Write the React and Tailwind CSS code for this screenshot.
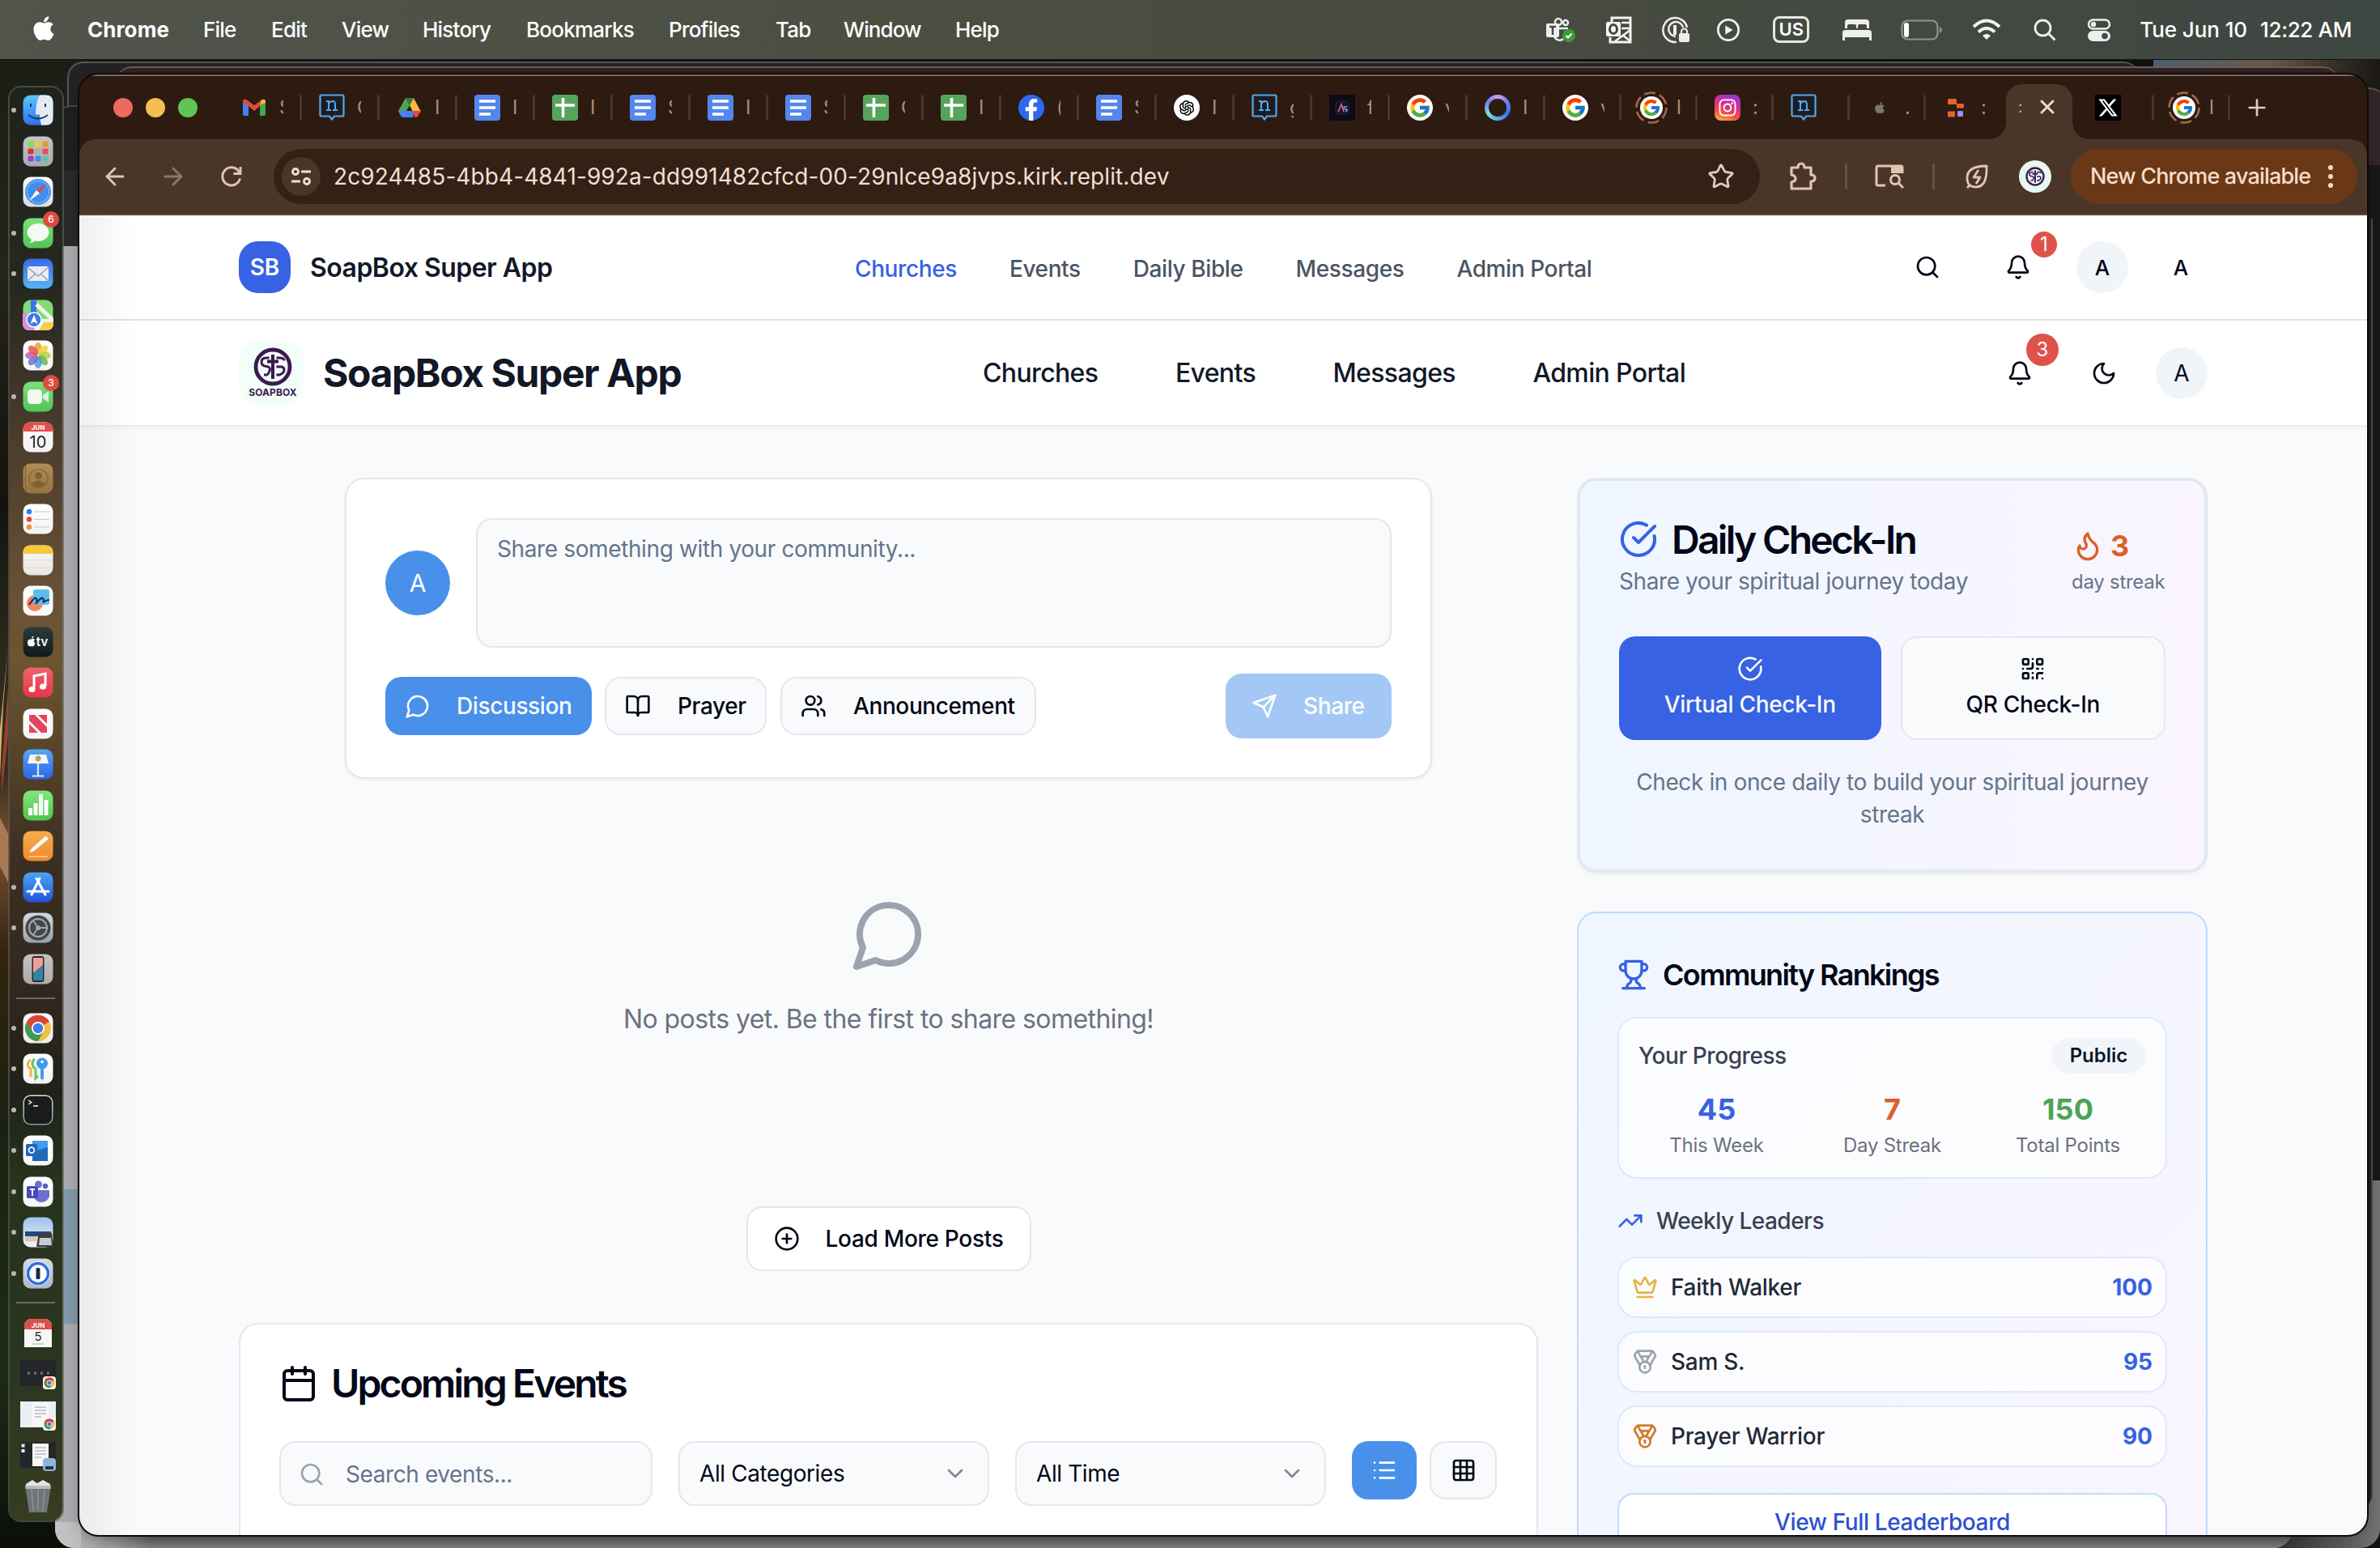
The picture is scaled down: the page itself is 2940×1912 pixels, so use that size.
import React from "react";
import {
  Search, Bell, BookOpen, Users, CirclePlus, Calendar, ChevronDown, List, Grid3x3, CircleCheckBig,
  QrCode, TrendingUp, Crown, Medal, ArrowLeft, ArrowRight, X, Plus, Star,
} from "lucide-react";
import { FaApple, FaFacebookF, FaInstagram } from "react-icons/fa";
import { FaXTwitter } from "react-icons/fa6";
import { FcGoogle } from "react-icons/fc";
import { AiOutlineOpenAI } from "react-icons/ai";

/* ---------- stroke icons ---------- */

function Stroke({ className, children }) {
  return (
    <svg viewBox="0 0 24 24" fill="none" stroke="currentColor" strokeWidth="2" strokeLinecap="round" strokeLinejoin="round" className={className}>
      {children}
    </svg>
  );
}
const Bubble = ({ className }) => <Stroke className={className}><path d="M7.9 20A9 9 0 1 0 4 16.1L2 22Z" /></Stroke>;
const SendIcon = ({ className }) => (
  <Stroke className={className}><path d="m22 2-7 20-4-9-9-4Z" /><path d="M22 2 11 13" /></Stroke>
);
const MoonIcon = ({ className }) => <Stroke className={className}><path d="M12 3a6 6 0 0 0 9 9 9 9 0 1 1-9-9Z" /></Stroke>;
const FlameIcon = ({ className }) => (
  <Stroke className={className}>
    <path d="M8.5 14.5A2.5 2.5 0 0 0 11 12c0-1.38-.5-2-1-3-1.072-2.143-.224-4.054 2-6 .5 2.5 2 4.9 4 6.5 2 1.6 3 3.5 3 5.5a7 7 0 1 1-14 0c0-1.153.433-2.294 1-3a2.5 2.5 0 0 0 2.5 2.5z" />
  </Stroke>
);
const TrophyIcon = ({ className }) => (
  <Stroke className={className}>
    <path d="M6 9H4.5a2.5 2.5 0 0 1 0-5H6" /><path d="M18 9h1.5a2.5 2.5 0 0 0 0-5H18" /><path d="M4 22h16" />
    <path d="M10 14.66V17c0 .55-.47.98-.97 1.21C7.85 18.75 7 20.24 7 22" />
    <path d="M14 14.66V17c0 .55.47.98.97 1.21C16.15 18.75 17 20.24 17 22" /><path d="M18 2H6v7a6 6 0 0 0 12 0V2Z" />
  </Stroke>
);

/* ---------- macOS menu bar ---------- */

const MENUS = [
  ["Chrome", "w-[143px] font-bold tracking-[0.003em]"],
  ["File", "w-[84px] font-medium tracking-[-0.03em]"],
  ["Edit", "w-[87px] font-medium tracking-[-0.03em]"],
  ["View", "w-[100px] font-medium tracking-[-0.03em]"],
  ["History", "w-[128px] font-medium tracking-[-0.03em]"],
  ["Bookmarks", "w-[176px] font-medium tracking-[-0.03em]"],
  ["Profiles", "w-[132px] font-medium tracking-[-0.03em]"],
  ["Tab", "w-[84px] font-medium tracking-[-0.03em]"],
  ["Window", "w-[138px] font-medium tracking-[-0.035em]"],
  ["Help", "w-[60px] font-medium tracking-[-0.03em]"],
];

function MenuBar() {
  return (
    <div className="relative flex h-[73px] w-full items-center bg-linear-to-r from-[#51544b] via-[#4a4c3f] to-[#3f4743] pl-[38px] text-[26px] text-white">
      <FaApple className="mr-[38px] mb-[3px] h-[34px] w-[32px]" />
      {MENUS.map(([label, cls]) => (
        <span key={label} className={`shrink-0 ${cls}`}>{label}</span>
      ))}
      <div className="mr-[35px] ml-auto flex items-center">
        <svg viewBox="0 0 40 34" className="mr-[36px] h-[34px] w-[40px]">
          <circle cx="18" cy="7" r="4" fill="none" stroke="#eee" strokeWidth="2.5" />
          <circle cx="27" cy="8" r="3" fill="none" stroke="#eee" strokeWidth="2.5" />
          <path d="M14 15h16M13 24c1 6 8 7 11 4" stroke="#eee" strokeWidth="2.5" fill="none" />
          <rect x="3" y="9" width="16" height="17" rx="2" fill="#eee" />
          <path d="M7 13h8M11 13v10" stroke="#474a3f" strokeWidth="2.5" />
          <circle cx="31" cy="24" r="8" fill="#3f9a34" /><path d="m27.500 24 2.500 2.500 4.500-5" stroke="#fff" strokeWidth="2" fill="none" />
        </svg>
        <svg viewBox="0 0 34 34" className="mr-[35px] h-[34px] w-[34px]">
          <path d="M8 7V2h23v30H6v-6" fill="none" stroke="#f4f4f4" strokeWidth="3" />
          <path d="M20 8h11M20 15h11M12 31l19-14M21 23l10 8" fill="none" stroke="#f4f4f4" strokeWidth="2.600" />
          <rect x="1" y="7" width="18" height="18" rx="2" fill="#f4f4f4" /><ellipse cx="10" cy="16" rx="4.500" ry="5.500" fill="none" stroke="#43483f" strokeWidth="3" />
        </svg>
        <svg viewBox="0 0 36 34" className="mr-[32px] h-[34px] w-[36px]" fill="none" stroke="#eee">
          <path d="M19 32A15 15 0 1 1 32 14" strokeWidth="2.500" /><path d="M18 25a9 9 0 1 1 9-11" strokeWidth="2.500" /><path d="M17 11v12" strokeWidth="4" />
          <rect x="22" y="21" width="13" height="11" rx="2" fill="#eee" stroke="none" /><path d="M25 22v-3a3.500 3.500 0 0 1 7 0v3" strokeWidth="2.200" />
        </svg>
        <svg viewBox="0 0 32 32" className="mr-[40px] h-[30px] w-[30px]">
          <circle cx="16" cy="16" r="13.500" fill="none" stroke="#eee" strokeWidth="3" /><path d="M12 10v12l10-6z" fill="#eee" />
        </svg>
        <span className="mr-[40px] flex h-[33px] w-[45px] items-center justify-center rounded-[8px] border-[3px] border-[#e6e6e4] text-[22px] font-semibold">US</span>
        <svg viewBox="0 0 38 28" className="mr-[35px] h-[28px] w-[38px]" fill="#eee">
          <path d="M4 12V5q0-4 4-4h22q4 0 4 4v7h-3V9q0-2-2-2h-7q-2 0-2 2v3h-2V9q0-2-2-2H9Q7 7 7 9v3zM1 27V17q0-3 4-3h28q4 0 4 3v10h-3v-4H4v4z" />
        </svg>
        <svg viewBox="0 0 52 26" className="mr-[36px] h-[26px] w-[52px]">
          <rect x="1.500" y="1.500" width="44" height="23" rx="7" fill="none" stroke="#90948e" strokeWidth="2.200" /><rect x="4" y="4" width="6" height="18" rx="3" fill="#fff" /><path d="M48 9q3 1.500 3 4t-3 4z" fill="#90948e" />
        </svg>
        <svg viewBox="0 0 36 28" className="mr-[40px] h-[28px] w-[36px]" fill="none" stroke="#f2f2f2" strokeWidth="4">
          <path d="M2 10Q18-5 34 10" /><path d="M8 16.500q10-9 20 0" /><path d="M18 26l-5-5q5-4 10 0z" fill="#f2f2f2" stroke="none" />
        </svg>
        <svg viewBox="0 0 28 28" className="mr-[38px] h-[28px] w-[28px]" fill="none" stroke="#eee" strokeWidth="2.800"><circle cx="11.500" cy="11.500" r="9.500" /><path d="m18.500 18.500 8 8" /></svg>
        <svg viewBox="0 0 30 28" className="mr-[35px] h-[28px] w-[30px]">
          <rect x="2" y="1.500" width="26" height="11" rx="5.500" fill="none" stroke="#eee" strokeWidth="2.500" /><circle cx="8" cy="7" r="3.200" fill="#eee" />
          <rect x="1" y="15" width="28" height="13" rx="6.500" fill="#eee" /><circle cx="22" cy="21.500" r="3.800" fill="#434943" />
        </svg>
        <span className="mr-[16px] font-medium tracking-[-0.003em]">Tue Jun 10</span>
        <span className="font-medium tracking-[-0.014em]">12:22 AM</span>
      </div>
    </div>
  );
}

/* ---------- dock ---------- */

const G = ({ id, a, b }) => (
  <defs><linearGradient id={id} x1="0" y1="0" x2="0" y2="1"><stop offset="0" stopColor={a} /><stop offset="1" stopColor={b} /></linearGradient></defs>
);

function Tile({ id, a, b, children }) {
  return (
    <svg viewBox="0 0 38 38" className="h-[38px] w-[38px]">
      <G id={id} a={a} b={b} />
      <rect x="0.5" y="0.5" width="37" height="37" rx="9" fill={`url(#${id})`} />
      {children}
    </svg>
  );
}

const ChromeMark = ({ r = 16, cx = 19, cy = 19 }) => (
  <g transform={`translate(${cx} ${cy}) scale(${r / 16})`}>
    <circle r="16" fill="#f5bf42" />
    <path d="M0 0-13.860-8A16 16 0 0 1 13.860-8z" fill="#d9453a" /><path d="M-13.860-8A16 16 0 0 0 0 16L7 4-7 4z" fill="#3f9a50" /><path d="M0-8h13.860A16 16 0 0 0-13.860-8L-7 4z" fill="#d9453a" />
    <circle r="8" fill="#fff" /><circle r="6.200" fill="#3f7de8" />
  </g>
);

const LAUNCH = ["#7ee04a", "#f5c33b", "#ee9433", "#d4372c", "#a9aeb2", "#ea4d63", "#9a3fc9", "#3b8df0", "#56c9a6"];
const PETALS = ["#f29a38", "#f5d33c", "#b9d23e", "#6bb85a", "#4e9fd8", "#6c74c9", "#b866b8", "#e8564c"];

const DOCK_APPS = [
  { dot: true, icon: <Tile id="d0" a="#5cc8fa" b="#2f6fee"><path d="M21 0.500h8q8.500 0 8.500 8.500v20q0 8.500-8.500 8.500h-6q-2-6-2-13h-5Q16 10 21 .5z" fill="#e6ebf3" /><path d="M10 11v4M28 11v4" stroke="#163a6b" strokeWidth="2" /><path d="M7 25q12 9 24 0" fill="none" stroke="#163a6b" strokeWidth="1.800" /></Tile> },
  { icon: <Tile id="d1" a="#c5c5c6" b="#a9a9ab">{LAUNCH.map((c, i) => <rect key={c} x={6.500 + (i % 3) * 9} y={6.500 + Math.floor(i / 3) * 9} width="7" height="7" rx="1.800" fill={c} />)}</Tile> },
  { icon: <Tile id="d2" a="#fdfdfd" b="#dcdcde"><circle cx="19" cy="19" r="16" fill="#3d8ff0" /><circle cx="19" cy="19" r="13.500" fill="none" stroke="#bfe0ff" strokeWidth="1.500" strokeDasharray="1 1.500" /><path d="M30 8 21 21l-4-4z" fill="#e5483f" /><path d="M8 30l9-13 4 4z" fill="#fff" /></Tile> },
  { dot: true, badge: "6", icon: <Tile id="d3" a="#7be07b" b="#51c654"><ellipse cx="19" cy="18" rx="13.500" ry="11" fill="#f2faf2" /><path d="M11 25q0 5-3 6 6 0 8-4z" fill="#f2faf2" /></Tile> },
  { dot: true, icon: <Tile id="d4" a="#3a69e6" b="#55b5f6"><rect x="6" y="10" width="26" height="18" rx="3" fill="#e9edf2" /><path d="m7 12 12 10 12-10M7 27l9-8M31 27l-9-8" fill="none" stroke="#8a98aa" strokeWidth="1.200" /></Tile> },
  { icon: <Tile id="d5" a="#7fdc76" b="#7fdc76"><path d="M0 24h38v5q0 9-9 9H9q-9 0-9-9z" fill="#f3f3ef" /><path d="M10 0h7v24h-7z" fill="#3973e8" /><path d="M0 17h9l6 21H9q-9 0-9-9z" fill="#dd8fd6" /><path d="M20 38l6-10h12v1q0 9-9 9z" fill="#f2cf4e" /><path d="M17 6 38 26" stroke="#f3f3ef" strokeWidth="5" /><circle cx="14" cy="25" r="9" fill="#3f78ea" stroke="#fff" strokeWidth="1.500" /><path d="m14 19 4.500 11-4.500-2.500L9.500 30z" fill="#fff" /></Tile> },
  { icon: <Tile id="d6" a="#ffffff" b="#f4f4f4">{PETALS.map((c, i) => <ellipse key={c} cx="19" cy="10.500" rx="4.600" ry="7.500" fill={c} opacity="0.85" transform={`rotate(${i * 45} 19 19)`} />)}</Tile> },
  { dot: true, badge: "3", icon: <Tile id="d7" a="#7be07b" b="#51c654"><rect x="6" y="10" width="18" height="18" rx="4.500" fill="#f0f8f0" /><path d="m25 17 7-5v14l-7-5z" fill="#e0f0e0" /></Tile> },
  { icon: <Tile id="d8" a="#fdfdfd" b="#f1f1f1"><path d="M0.500 12V9.500q0-9 9-9h19q9 0 9 9V12z" fill="#df5148" /><text x="19" y="10" textAnchor="middle" fontSize="8" fontWeight="700" fill="#fff">JUN</text><text x="19" y="32" textAnchor="middle" fontSize="20" fill="#222">10</text></Tile> },
  { icon: <Tile id="d9" a="#b18c54" b="#96733f"><circle cx="19.500" cy="19" r="11.500" fill="none" stroke="#7f6133" strokeWidth="1.200" /><circle cx="19.500" cy="15.500" r="4.500" fill="#7f6133" /><path d="M11 26q8-9 17 0-8 7-17 0z" fill="#7f6133" /><path d="M3.500 2v34" stroke="#7f6133" /></Tile> },
  { icon: <Tile id="d10" a="#ffffff" b="#f2f2f2"><path d="M14 10h19M14 19.500h19M14 29h19" stroke="#c8c8c8" strokeWidth="1.200" /><circle cx="8" cy="10" r="3.200" fill="#3a78ee" /><circle cx="8" cy="19.500" r="3.200" fill="#e5493f" /><circle cx="8" cy="29" r="3.200" fill="#ee9434" /></Tile> },
  { icon: <Tile id="d11" a="#fbfaf7" b="#e8e6e1"><path d="M.5 11V9.500q0-9 9-9h19q9 0 9 9V11z" fill="#f5c83d" /><path d="M1 19h36M1 28h36" stroke="#cfcdc8" strokeDasharray="1 1" /></Tile> },
  { icon: <Tile id="d12" a="#ffffff" b="#f7f7f7"><circle cx="15" cy="22" r="10" fill="#ef8457" /><rect x="13" y="5" width="20" height="19" rx="3" fill="#5dbdec" /><path d="M8 24q8-12 9-7t0 5q6-8 8-6t0 5q4-3 8-3" fill="none" stroke="#15355a" strokeWidth="2.200" /></Tile> },
  { icon: <Tile id="d13" a="#2d3b3c" b="#111a1b"><text x="24" y="24" textAnchor="middle" fontSize="15" fontWeight="600" fill="#fff">tv</text><path d="M11 15.500q2.500-1.500 4 .5-2.500 2 .5 4.500-1.500 4-3 4l-1.500-.5-1.500.5Q6 24 6 19.500t5-4zM11 14.500q0-2.500 2.500-3 0 2.500-2.500 3z" fill="#fff" /></Tile> },
  { icon: <Tile id="d14" a="#f1626f" b="#e63546"><path d="M14 27V11l14-3v15" fill="none" stroke="#fff" strokeWidth="3" /><ellipse cx="11.500" cy="27.500" rx="4" ry="3.500" fill="#fff" /><ellipse cx="25" cy="24" rx="4" ry="3.500" fill="#fff" /></Tile> },
  { icon: <Tile id="d15" a="#ffffff" b="#f5f5f5"><path d="M8 8h7l15 15v7h-7L8 15z" fill="#e5455c" /><path d="M19 8h11v11zM8 19l11 11H8z" fill="#e5455c" /></Tile> },
  { icon: <Tile id="d16" a="#56a8f5" b="#2a66e4"><path d="M9 7h20l3 11H6z" fill="#f3f6fb" /><circle cx="19" cy="12" r="3.500" fill="#e2993e" /><path d="M19 12v-3.500a3.500 3.500 0 0 1 3.500 3.500z" fill="#58a9d8" /><path d="M19 18v15M12 33.500h14" stroke="#dfe8f5" strokeWidth="2.200" /></Tile> },
  { icon: <Tile id="d17" a="#83e77c" b="#4cc64d"><path d="M7 22h5v9H7zM13.500 16h5v15h-5zM20 5h5v26h-5zM26.500 12h5v19h-5z" fill="#fff" /></Tile> },
  { icon: <Tile id="d18" a="#f6ac4c" b="#ee8a2f"><path d="m8 27 3-5L28 7q4 1 3 4L14 25z" fill="#fff" /><path d="M7 32h24" stroke="#f8d2a0" strokeWidth="1.500" /></Tile> },
  { dot: true, icon: <Tile id="d19" a="#49a5f2" b="#2453d8"><path d="M21 8 11 28M17 8l11 20M6 24h26" stroke="#fff" strokeWidth="3" strokeLinecap="round" /></Tile> },
  { dot: true, icon: <Tile id="d20" a="#d3dbe2" b="#9a9fa5"><circle cx="19" cy="19" r="15.500" fill="#43474b" /><circle cx="19" cy="19" r="11" fill="none" stroke="#a3a8ac" strokeWidth="2" /><path d="M19 19h11M19 19l-6-9M19 19l-6 9" stroke="#a3a8ac" strokeWidth="1.800" /><circle cx="19" cy="19" r="3" fill="#a3a8ac" /></Tile> },
  { icon: <Tile id="d21" a="#c4c3c3" b="#adacab"><rect x="11.500" y="3" width="15" height="32" rx="3" fill="#262a30" /><path d="M13 5h12v9L13 24z" fill="#f0a097" /><path d="M13 24l12-10v19H13z" fill="#2f86a5" /></Tile> },
];

const DOCK_RUNNING = [
  <Tile key="c" id="e0" a="#fafafa" b="#ececec"><ChromeMark /></Tile>,
  <Tile key="k" id="e1" a="#ffffff" b="#f3f1ec"><circle cx="24" cy="12.500" r="7" fill="#3f9cf0" /><path d="M22 18h4v13l-2 2-2-2z" fill="#3f9cf0" /><circle cx="24" cy="10.500" r="1.800" fill="#fff" /><path d="M15 7a7 7 0 0 0 1 12v12l3-3" fill="none" stroke="#6cc36a" strokeWidth="3" /><path d="M10 8a6 6 0 0 0 0 11v10" fill="none" stroke="#f2b43c" strokeWidth="3" /></Tile>,
  <Tile key="t" id="e2" a="#d3e4e6" b="#85989b"><rect x="2" y="2" width="34" height="34" rx="7.500" fill="#1b1b1c" /><path d="m7 7 4 2.500L7 12M13 14h6" fill="none" stroke="#fff" strokeWidth="1.300" /></Tile>,
  <Tile key="o" id="e3" a="#ffffff" b="#f6f6f6"><rect x="12" y="7" width="19" height="24" fill="#3f9ce8" /><path d="M12 21l19-6v17H12z" fill="#2365b8" /><rect x="4" y="11" width="14" height="15" rx="1.500" fill="#1f66be" /><circle cx="11" cy="18.500" r="3.400" fill="none" stroke="#fff" strokeWidth="1.700" /></Tile>,
  <Tile key="m" id="e4" a="#ffffff" b="#f6f6f6"><circle cx="19.500" cy="10" r="4.500" fill="#6a70d0" /><circle cx="28" cy="12" r="3.200" fill="#5a60c4" /><path d="M14 17h19v8q-3 7-10 7t-9-7z" fill="#6a70d0" /><rect x="5" y="12" width="14" height="15" rx="1.500" fill="#454cb5" /><path d="M9 16h6M12 16v8" stroke="#fff" strokeWidth="1.800" /></Tile>,
  <Tile key="p" id="e5" a="#9cc0ec" b="#f2f4f6"><path d="M3 18h32v6H3z" fill="#24487f" /><path d="M3 24h32v6H3z" fill="#d8c9b0" /><path d="M20 20h16l2 17H17z" fill="#3b3d40" /><path d="M21 26h14l1 9H20z" fill="#c8cbce" /></Tile>,
  <Tile key="1" id="e6" a="#d8dbe6" b="#aeb3c6"><circle cx="19" cy="19" r="15" fill="#fff" /><circle cx="19" cy="19" r="12.500" fill="none" stroke="#2c6fe6" strokeWidth="3.500" /><rect x="16.500" y="12" width="5" height="14" rx="1.500" fill="#1b2b45" /></Tile>,
];

const Thumb = ({ dark, doc, badge }) => (
  <svg viewBox="0 0 44 40" className="ml-[4px] h-[40px] w-[44px]">
    <rect x="0" y="4" width="44" height="32" fill={dark ? "#24262a" : "#eceff2"} />
    {doc && <rect x="15" y="6" width="20" height="28" fill="#f7f7f7" />}
    {doc && <path d="M18 11h14M18 15h14M18 19h14M18 23h8" stroke="#b9bcc0" strokeWidth="1.500" />}
    {doc && dark && <path d="M1.500 8.500h4M1.500 15h4" stroke="#f2f2f2" strokeWidth="4" />}
    {!doc && <path d="M9 20h3M17 20h3M25 20h3M33 20h3" stroke="#7e756f" strokeWidth="3" />}
    {badge === "chrome" ? <><rect x="28" y="24" width="16" height="16" rx="4" fill="#f5f5f5" /><ChromeMark r={6.500} cx={36} cy={32} /></> : <><rect x="28" y="24" width="16" height="16" rx="4" fill="#8eb3dd" /><path d="M31 34h10v4H31z" fill="#333" /></>}
  </svg>
);

function DockCell({ dot, badge, children }) {
  return (
    <div className="relative flex h-[50.5px] w-full items-center pl-[16px]">
      {dot && <span className="absolute left-[2px] h-[6px] w-[6px] rounded-full bg-[#b5b8b0]" />}
      {children}
      {badge && <span className="absolute top-[-2px] left-[41px] flex h-[20px] w-[20px] items-center justify-center rounded-full bg-[#e04b40] text-[12px] font-medium text-white">{badge}</span>}
    </div>
  );
}

function Dock() {
  return (
    <div className="absolute top-[106px] left-[10px] flex h-[1774px] w-[69px] flex-col rounded-[16px] border-2 border-[#5c5a50]/70 pt-[3px]">
      <div className="absolute inset-0 rounded-[14px] bg-[linear-gradient(180deg,#1f231c_0%,#262820_14%,#4a3b2c_24%,#6a5236_36%,#6d552f_40%,#3c2e22_54%,#33291f_62%,#1f2119_70%,#26331d_76%,#2a3520_88%,#363c22_100%)]" />
      <div className="relative">
        {DOCK_APPS.map((a, i) => <DockCell key={i} dot={a.dot} badge={a.badge}>{a.icon}</DockCell>)}
        <div className="flex h-[22.5px] items-center"><div className="ml-[8px] h-[2px] w-[48px] bg-[#8a857a]/70" /></div>
        {DOCK_RUNNING.map((ic, i) => <DockCell key={i} dot>{ic}</DockCell>)}
        <div className="flex h-[22.5px] items-center"><div className="ml-[8px] h-[2px] w-[48px] bg-[#7f8674]/70" /></div>
        <DockCell>
          <svg viewBox="0 0 38 38" className="h-[38px] w-[38px]">
            <path d="M2 8q4-6 8-6h18q4 0 8 6v29H2z" fill="#f7f7f7" /><path d="M2 15V8q4-6 8-6h18q4 0 8 6v7z" fill="#d9524a" />
            <text x="19" y="13" textAnchor="middle" fontSize="8" fontWeight="700" fill="#fff">JUN</text><text x="19" y="29" textAnchor="middle" fontSize="15" fill="#222">5</text><path d="M12 33h14" stroke="#aaa" />
          </svg>
        </DockCell>
        <div className="-ml-[7px]">
          <DockCell><Thumb dark badge="chrome" /></DockCell>
          <DockCell><Thumb doc badge="chrome" /></DockCell>
          <DockCell><Thumb dark doc badge="preview" /></DockCell>
        </div>
        <DockCell>
          <svg viewBox="0 0 38 42" className="h-[42px] w-[38px]">
            <path d="M4 6 12 1l6 4 7-4 9 5v5H4z" fill="#e4e4e2" /><path d="M3 8h32l-5 33H8z" fill="#707477" /><path d="M3 8h32l-.7 4H3.700z" fill="#b6babc" /><path d="M11 13l2 26M19 13v26M27 13l-2 26" stroke="#8d9194" strokeWidth="1.500" />
          </svg>
        </DockCell>
      </div>
    </div>
  );
}

/* ---------- browser tabs ---------- */

const FavGmail = () => (
  <svg viewBox="0 0 32 32" className="h-8 w-8"><path d="M2 7v17q0 2 2 2h5V13z" fill="#4a7ff0" /><path d="M30 7v17q0 2-2 2h-5V13z" fill="#41a556" /><path d="M23 13V8l2-1.500Q30 4 30 9v1z" fill="#f5bd3d" /><path d="M2 10V8q1-4 5-1.500L16 13l9-6.500L23 14l-7 6-7-6z" fill="#dd4b3f" /></svg>
);
const FavN = () => (
  <svg viewBox="0 0 32 34" className="h-[34px] w-8"><path d="M3 1.500h26q1.500 0 1.500 1.500v23q0 1.500-1.500 1.500H19l-3 4-3-4H3q-1.500 0-1.500-1.500V3q0-1.500 1.500-1.500z" fill="#1c1d24" stroke="#54a8ea" strokeWidth="2.200" /><path d="M9 9h3v11M9 20h6M12 12q2-3 5-3t3 4v7M17 20h6" fill="none" stroke="#54a8ea" strokeWidth="2" /></svg>
);
const FavDrive = () => (
  <svg viewBox="0 0 32 32" className="h-8 w-8"><path d="M11 4h10l-5 9z" fill="#2f7d3e" /><path d="M11 4l5 9-8 14-6-7z" fill="#4ba658" /><path d="M21 4l9 17H20l-4-8z" fill="#f5b93b" /><path d="M2 20h20l-2 8H8q-2 0-3-2z" fill="#4a7ff0" /><path d="M20 20h10l-4 7q-1 1-3 1h-1z" fill="#de4a3c" /></svg>
);
const FavDocs = () => (
  <svg viewBox="0 0 32 32" className="h-8 w-8"><rect width="32" height="32" rx="4" fill="#5486ed" /><path d="M6 8h20M6 16h20M6 24h14" stroke="#fff" strokeWidth="3.600" /></svg>
);
const FavSheets = () => (
  <svg viewBox="0 0 32 32" className="h-8 w-8"><rect width="32" height="32" rx="4" fill="#56a35b" /><path d="M4 13h24M13.500 4v24" stroke="#fff" strokeWidth="3.600" /></svg>
);
const FavFb = () => (
  <span className="flex h-8 w-8 items-end justify-center overflow-hidden rounded-full bg-[#2f68f0]"><FaFacebookF className="h-[27px] w-[20px] text-white" /></span>
);
const FavGpt = () => (
  <span className="flex h-8 w-8 items-center justify-center rounded-full bg-white"><AiOutlineOpenAI className="h-6 w-6 text-black" /></span>
);
const FavAs = () => (
  <svg viewBox="0 0 32 32" className="h-8 w-8"><rect width="32" height="32" fill="#0c0b18" /><rect x="8" y="8" width="16" height="16" rx="4" fill="#15121c" stroke="#2b2636" /><path d="m11 21 4-9 3 9" fill="none" stroke="#d45ba6" strokeWidth="1.800" /><path d="M22 15q-4-1-4 1t3 2-1 3" fill="none" stroke="#7aa7e8" strokeWidth="1.500" /></svg>
);
const FavG = () => <span className="flex h-8 w-8 items-center justify-center rounded-full bg-white"><FcGoogle className="h-[28px] w-[28px]" /></span>;
const FavGLoad = () => (
  <span className="relative flex h-8 w-8 items-center justify-center">
    <span className="flex h-7 w-7 items-center justify-center rounded-full bg-white"><FcGoogle className="h-[24px] w-[24px]" /></span>
    <svg viewBox="0 0 40 40" className="absolute -top-1 -left-1 h-10 w-10"><circle cx="20" cy="20" r="18.500" fill="none" stroke="#a4684a" strokeWidth="2.600" strokeDasharray="14 5.370" /></svg>
  </span>
);
const FavRing = () => <span className="flex h-8 w-8 items-center justify-center rounded-full bg-[conic-gradient(#cf9ae8,#6d83f0,#3d6ce8,#5aa9f2,#7de0cf,#6a7ef0,#cf9ae8)]"><span className="h-[22px] w-[22px] rounded-full bg-[#2d1b11]" /></span>;
const FavInsta = () => (
  <span className="flex h-8 w-8 items-center justify-center rounded-[8px] bg-[linear-gradient(200deg,#8b35e8_0%,#e02d86_45%,#f5503c_70%,#f9c54a_100%)]"><FaInstagram className="h-6 w-6 text-white" /></span>
);
const FavApple = () => <span className="flex h-8 w-8 items-center justify-center"><FaApple className="h-4 w-4 text-[#7a7674]" /></span>;
const FavReplit = () => (
  <svg viewBox="0 0 32 32" className="h-8 w-8"><path d="M7.500 5h8q1.500 0 1.500 1.500V11h7.500q1.500 0 1.500 1.500V15q0 1.500-1.500 1.500H17V12H7.500Q6 12 6 10.500v-4Q6 5 7.500 5z" fill="#e0662c" /><path d="M6 20.500h9V26q0 1.500-1.500 1.500h-6Q6 27.500 6 26z" fill="#e0662c" /><rect x="18" y="20" width="7" height="7" rx="1" fill="#a18bf5" /></svg>
);
const FavX = () => <span className="flex h-8 w-8 items-center justify-center bg-black"><FaXTwitter className="h-[26px] w-[26px] text-white" /></span>;

const TABS = [
  [FavGmail, "S"], [FavN, "C"], [FavDrive, "I"], [FavDocs, "I"], [FavSheets, "I"], [FavDocs, "S"], [FavDocs, "I"], [FavDocs, "S"], [FavSheets, "C"],
  [FavSheets, "I"], [FavFb, "("], [FavDocs, "S"], [FavGpt, "I"], [FavN, "g"], [FavAs, "f"], [FavG, "v"], [FavRing, "I"],
];
const TABS_NARROW = [[FavG, "v"], [FavGLoad, "l"], [FavInsta, ":"], [FavN, ""], [FavApple, "."], [FavReplit, ":"]];
const TABS_AFTER = [[FavX, ""], [FavGLoad, "l"]];

function Tab({ icon: Icon, label, width, divider = true }) {
  return (
    <div className={`relative flex h-full shrink-0 items-center pl-5 ${width}`}>
      <Icon />
      <span className="ml-[15px] w-[5px] overflow-hidden text-[24px] leading-8 text-[#b08d7a]">{label}</span>
      {divider && <span className="absolute right-[1px] h-8 w-[3px] rounded-full bg-[#4a3628]" />}
    </div>
  );
}

function TabStrip() {
  return (
    <div className="flex h-[78px] items-center">
      <div className="ml-[42px] flex w-[138px] gap-4">
        <span className="h-6 w-6 rounded-full bg-[#ec6a5e]" />
        <span className="h-6 w-6 rounded-full bg-[#f4bf4f]" />
        <span className="h-6 w-6 rounded-full bg-[#61c554]" />
      </div>
      {TABS.map(([I, l], i) => <Tab key={i} icon={I} label={l} width="w-[96px]" />)}
      {TABS_NARROW.map(([I, l], i) => <Tab key={i} icon={I} label={l} width="w-[94px]" divider={i < 5} />)}
      <div className="relative mr-[8px] ml-[4px] flex h-[68px] w-[82px] items-center self-end rounded-t-[20px] bg-[#4a3629]">
        <span className="absolute bottom-0 -left-5 h-5 w-5 bg-[radial-gradient(circle_at_0_0,#2d1b11_19.5px,#4a3629_20px)]" />
        <span className="absolute -right-5 bottom-0 h-5 w-5 bg-[radial-gradient(circle_at_100%_0,#2d1b11_19.5px,#4a3629_20px)]" />
        <span className="-mt-3 ml-[15px] w-[4px] overflow-hidden text-[20px] leading-8 text-[#c9b0a2]">:</span>
        <X className="-mt-3 ml-[18px] h-7 w-7 text-[#f0dccf]" strokeWidth={2.5} />
      </div>
      {TABS_AFTER.map(([I, l], i) => <Tab key={i} icon={I} label={l} width="w-[94px]" />)}
      <Plus className="ml-[16px] h-[32px] w-[32px] text-[#e5cbbd]" strokeWidth={2} />
    </div>
  );
}

function Cross({ className, color }) {
  return (
    <svg viewBox="0 0 24 24" className={className} fill="none" stroke={color}>
      <circle cx="12" cy="12" r="10.500" strokeWidth="2.400" /><path d="M12 4.500v15M8.500 8.800h7" strokeWidth="2" />
      <path d="M9.800 6.500H8Q5 6.500 5 9t3 2.800 2 2.800-2 2.400H6.500M14.200 6.500H16q3 0 3 1.800M14.200 12H17q2 0 2 2t-3 3h-1.800" strokeWidth="1.500" />
    </svg>
  );
}

function Toolbar() {
  return (
    <div className="flex h-[94px] items-center rounded-t-[20px] border-b-2 border-[#57463c] bg-[#4a3629] pl-[8px]">
      <span className="flex w-[72px] justify-center"><ArrowLeft className="h-[34px] w-[34px] text-[#e3c4b2]" /></span>
      <span className="flex w-[72px] justify-center"><ArrowRight className="h-[34px] w-[34px] text-[#8e7768]" /></span>
      <span className="flex w-[72px] justify-center">
        <svg viewBox="0 0 32 32" className="h-8 w-8" fill="none" stroke="#e3c4b2" strokeWidth="3"><path d="M26.500 18.500A11 11 0 1 1 24 8.500l2.500 3" /><path d="M27 4v8.500h-8.500" /></svg>
      </span>
      <div className="ml-[16px] flex h-[68px] w-[1836px] items-center rounded-full bg-[#342115] pl-[10px]">
        <span className="flex h-12 w-12 items-center justify-center rounded-full bg-[#4a3629]">
          <svg viewBox="0 0 26 26" className="h-[26px] w-[26px]" fill="none" stroke="#f1dfd5" strokeWidth="2.800"><circle cx="6" cy="7" r="3.500" /><path d="M13 7h12M1 19h11" /><circle cx="20" cy="19" r="3.500" /></svg>
        </span>
        <span className="ml-[16px] text-[28px] tracking-[0.0035em] text-[#f1dfd5]">2c924485-4bb4-4841-992a-dd991482cfcd-00-29nlce9a8jvps.kirk.replit.dev</span>
        <Star className="mr-[31px] ml-auto h-[34px] w-[34px] text-[#d9cbc4]" strokeWidth={2} />
      </div>
      <span className="ml-[27px] flex w-[52px] justify-center">
        <svg viewBox="0 0 36 36" className="h-[36px] w-[36px]" fill="none" stroke="#e3c4b2" strokeWidth="3.200" strokeLinejoin="round"><path d="M4 7h8q0-5 4-5t4 5h8v9q5 0 5 4t-5 4v9H4v-8q5-1 5-4.500T4 16z" /></svg>
      </span>
      <span className="ml-[26px] h-8 w-[3px] bg-[#6b5042]" />
      <span className="ml-[26px] flex w-[52px] justify-center">
        <svg viewBox="0 0 36 32" className="h-[32px] w-[36px]" fill="none" stroke="#e3c4b2" strokeWidth="3"><path d="M13 27H4q-2 0-2-2V5q0-2 2-2h28q2 0 2 2v7" /><path d="M20 3h13v9H20z" fill="#e3c4b2" stroke="none" /><circle cx="25" cy="20" r="5.500" /><path d="m29 24 6 6" /></svg>
      </span>
      <span className="ml-[27px] h-8 w-[3px] bg-[#6b5042]" />
      <span className="ml-[26px] flex w-[52px] justify-center">
        <svg viewBox="0 0 32 32" className="h-8 w-8" fill="none" stroke="#e3c4b2" strokeWidth="2.800" strokeLinejoin="round"><path d="M28 3Q29 29 15 29 4 29 4 18 4 3 28 3zM4 30l4-4" /><path d="m18 8-6 9h8l-5 8" /></svg>
      </span>
      <span className="ml-[26px] flex h-10 w-10 items-center justify-center rounded-full bg-[#e9f7f1]"><Cross className="h-6 w-6" color="#3a1d55" /></span>
      <div className="ml-[24px] flex h-[68px] w-[354px] items-center rounded-full bg-[#6a3816] pl-[24px]">
        <span className="text-[27px] font-medium tracking-[-0.03em] text-[#f8dccb]">New Chrome available</span>
        <span className="mr-[30px] ml-auto flex flex-col gap-[5px]">
          <span className="h-[6px] w-[6px] rounded-full bg-[#f8dccb]" /><span className="h-[6px] w-[6px] rounded-full bg-[#f8dccb]" /><span className="h-[6px] w-[6px] rounded-full bg-[#f8dccb]" />
        </span>
      </div>
    </div>
  );
}

/* ---------- page ---------- */

function TopNav() {
  return (
    <header className="flex h-[130px] shrink-0 items-center border-b-2 border-[#e4e6ea] bg-white pr-[198px] pl-[197px]">
      <div className="flex w-[761px] items-center gap-[24px]">
        <span className="flex h-16 w-16 items-center justify-center rounded-[24px] bg-[#3662e3] text-[28px] font-semibold text-white">SB</span>
        <span className="mt-[2px] text-[32px] font-semibold tracking-[-0.0165em] text-[#111827]">SoapBox Super App</span>
      </div>
      <nav className="mt-[4px] flex gap-[65px] text-[28px] font-medium tracking-[-0.014em] text-[#4b5563]">
        <a className="text-[#3662e3]">Churches</a><a>Events</a><a>Daily Bible</a><a>Messages</a><a>Admin Portal</a>
      </nav>
      <div className="ml-auto flex items-center text-[26px] font-medium text-[#020817]">
        <span className="mr-12 flex h-16 w-16 items-center justify-center"><Search className="h-8 w-8" /></span>
        <span className="relative mr-10 flex h-16 w-16 items-center justify-center">
          <Bell className="h-8 w-8" />
          <span className="absolute -top-[12px] left-[48px] flex h-8 w-8 items-center justify-center rounded-full bg-[#df524c] text-[24px] font-normal text-white">1</span>
        </span>
        <span className="mr-[33px] flex h-16 w-16 items-center justify-center rounded-full bg-[#f1f5f9]">A</span>
        <span className="flex h-16 w-16 items-center justify-center">A</span>
      </div>
    </header>
  );
}

function SecondNav() {
  return (
    <header className="relative flex h-[129px] shrink-0 items-center bg-white pr-[197px] pl-[197px] shadow-[0_2px_5px_rgba(0,0,0,0.08)]">
      <div className="flex w-[919px] items-center gap-[24px]">
        <span className="flex h-20 w-20 flex-col items-center rounded-[24px] bg-[#f3fef9] pt-[8px] pl-[4px]">
          <Cross className="h-[48px] w-[48px]" color="#3b1a50" />
          <span className="text-[12px] leading-[16px] font-bold tracking-[0.01em] text-[#3b1a50]">SOAPBOX</span>
        </span>
        <span className="text-[48px] font-bold tracking-[-0.0295em] text-[#111827]">SoapBox Super App</span>
      </div>
      <nav className="flex gap-[95.500px] text-[32px] font-medium tracking-[-0.02em] text-[#111827]">
        <a>Churches</a><a>Events</a><a>Messages</a><a>Admin Portal</a>
      </nav>
      <div className="ml-auto flex items-center text-[28px] text-[#020817]">
        <span className="relative mr-10 flex h-16 w-16 items-center justify-center">
          <Bell className="h-8 w-8" />
          <span className="absolute -top-[17px] left-[40px] flex h-10 w-10 items-center justify-center rounded-full bg-[#df524c] text-[24px] text-white">3</span>
        </span>
        <span className="mr-8 flex h-16 w-16 items-center justify-center"><MoonIcon className="h-8 w-8" /></span>
        <span className="flex h-16 w-16 items-center justify-center rounded-full bg-[#f1f5f9]">A</span>
      </div>
    </header>
  );
}

function Composer() {
  return (
    <section className="mx-auto flex h-[372px] w-[1343px] flex-col rounded-[24px] border-2 border-[#e5e7eb] bg-white px-[48px] pt-[48px] shadow-[0_2px_4px_rgba(0,0,0,0.05)]">
      <div className="flex items-center gap-[32px]">
        <span className="flex h-20 w-20 shrink-0 items-center justify-center rounded-full bg-[#4990eb] text-[30px] text-white">A</span>
        <div className="h-40 flex-1 rounded-[20px] border-2 border-[#e5e7eb] bg-[#f9fafc] px-[24px] pt-[16px] text-[28px] leading-[40px] tracking-[-0.0135em] text-[#64748b]">
          Share something with your community...
        </div>
      </div>
      <div className="mt-[32px] flex items-center text-[28px] font-medium tracking-[-0.014em]">
        <button className="flex h-[72px] w-[255px] items-center rounded-[20px] bg-[#4990eb] pl-[24px] text-[#f8fafc]"><Bubble className="mr-[32px] h-8 w-8" />Discussion</button>
        <button className="ml-[16px] flex h-[72px] w-[200px] items-center rounded-[20px] border-2 border-[#e2e8f0] bg-[#f9fafc] pl-[23px] text-[#020817]"><BookOpen className="mr-[33px] h-8 w-8" />Prayer</button>
        <button className="ml-[17px] flex h-[72px] w-[316px] items-center rounded-[20px] border-2 border-[#e2e8f0] bg-[#f9fafc] pl-[23px] text-[#020817]"><Users className="mr-[33px] h-8 w-8" />Announcement</button>
        <button className="ml-auto flex h-[80px] w-[205px] items-center rounded-[20px] bg-[#a3c8f5] pl-[32px] text-white"><SendIcon className="mr-[32px] h-8 w-8" />Share</button>
      </div>
    </section>
  );
}

function UpcomingEvents() {
  return (
    <section className="mt-16 h-[500px] shrink-0 rounded-[24px] border-2 border-[#e2e8f0] bg-white px-[48px] pt-[49px]">
      <h2 className="flex h-12 items-center gap-[16px] text-[48px] font-semibold tracking-[-0.0594em] text-[#020817]"><Calendar className="h-12 w-12" />Upcoming Events</h2>
      <div className="mt-[47px] flex items-start text-[28px] tracking-[-0.0145em] text-[#020817]">
        <div className="mr-8 flex h-20 w-[461px] items-center rounded-[20px] border-2 border-[#e2e8f0] bg-[#f9fafc] pt-[2px] pl-[22px] text-[#64748b]"><Search className="mr-[26px] h-8 w-8 text-[#9ca3af]" />Search events...</div>
        <div className="mr-8 flex h-20 w-[384px] items-center justify-between rounded-[20px] border-2 border-[#e2e8f0] bg-[#f9fafc] pr-[24px] pl-[24px]">All Categories<ChevronDown className="h-8 w-8 text-[#84878f]" /></div>
        <div className="mr-8 flex h-20 w-[384px] items-center justify-between rounded-[20px] border-2 border-[#e2e8f0] bg-[#f9fafc] pr-[24px] pl-[24px]">All Time<ChevronDown className="h-8 w-8 text-[#84878f]" /></div>
        <div className="mr-[16px] flex h-[72px] w-[80px] items-center justify-center rounded-[20px] bg-[#4990eb] text-white"><List className="h-8 w-8" /></div>
        <div className="flex h-[72px] w-[83px] items-center justify-center rounded-[20px] border-2 border-[#e2e8f0] bg-[#f9fafc]"><Grid3x3 className="h-8 w-8" /></div>
      </div>
    </section>
  );
}

function DailyCheckIn() {
  return (
    <section className="h-[488px] rounded-[24px] border-4 border-[#e2e8f0] bg-linear-to-r from-[#eff6ff] to-[#faf5ff] px-[48px] pt-[48px] shadow-[0_2px_4px_rgba(0,0,0,0.05)]">
      <div className="flex justify-between">
        <div>
          <h2 className="flex h-12 items-center gap-[17px] text-[48px] font-semibold tracking-[-0.056em] text-[#020817]"><CircleCheckBig className="h-12 w-12 text-[#3662e3]" /><span className="mt-[2px]">Daily Check-In</span></h2>
          <p className="mt-2 text-[28px] leading-10 tracking-[-0.0146em] text-[#64748b]">Share your spiritual journey today</p>
        </div>
        <div className="w-[116px] pt-[8px]">
          <div className="flex h-12 items-center gap-[8px] text-[36px] font-bold text-[#dc5f2a]"><FlameIcon className="h-10 w-10" />3</div>
          <div className="mt-[5px] text-[24px] leading-8 tracking-[-0.011em] text-[#64748b]">day streak</div>
        </div>
      </div>
      <div className="mt-12 flex gap-6 text-[28px] font-medium tracking-[-0.0105em]">
        <button className="flex h-32 flex-1 flex-col items-center rounded-[20px] bg-[#3662e3] pt-[24px] text-[#f8fafc]"><CircleCheckBig className="h-8 w-8" /><span className="mt-[8px] leading-10">Virtual Check-In</span></button>
        <button className="flex h-32 flex-1 flex-col items-center rounded-[20px] border-2 border-[#e2e8f0] bg-[#f9fafc] pt-[22px] text-[#020817]"><QrCode className="h-8 w-8" /><span className="mt-[8px] leading-10">QR Check-In</span></button>
      </div>
      <p className="mt-8 text-center text-[28px] leading-10 tracking-[-0.0135em] text-[#64748b]">Check in once daily to build your spiritual journey streak</p>
    </section>
  );
}

const STATS = [["45", "This Week", "text-[#3662e3]"], ["7", "Day Streak", "text-[#dc5f2a]"], ["150", "Total Points", "text-[#4ba356]"]];
const LEADERS = [[Crown, "text-[#e6b43c]", "Faith Walker", "100"], [Medal, "text-[#9ca3af]", "Sam S.", "95"], [Medal, "text-[#d07a2d]", "Prayer Warrior", "90"]];

function Rankings() {
  return (
    <section className="mt-12 h-[900px] shrink-0 rounded-[24px] border-2 border-[#bfdbfe] bg-linear-to-br from-[#eff6ff] to-[#faf5ff] px-[48px] pt-[52px]">
      <h2 className="flex h-12 items-center gap-[16px] text-[36px] font-semibold tracking-[-0.0459em] text-[#020817]"><TrophyIcon className="h-10 w-10 text-[#3662e3]" />Community Rankings</h2>
      <div className="mt-7 h-[200px] rounded-[24px] border-2 border-[#dbeafe] bg-white/70 px-6 pt-6">
        <div className="flex h-11 items-center justify-between">
          <span className="text-[28px] font-medium tracking-[-0.016em] text-[#374151]">Your Progress</span>
          <span className="flex h-11 w-[117px] items-center justify-center rounded-full bg-[#f1f5f9] text-[24px] font-semibold text-[#0f172a]">Public</span>
        </div>
        <div className="mt-4 grid grid-cols-3 gap-6 text-center">
          {STATS.map(([n, l, c]) => (
            <div key={l}>
              <div className={`text-[36px] leading-[56px] font-bold ${c}`}>{n}</div>
              <div className="text-[24px] leading-[34px] tracking-[-0.01em] text-[#6b7280]">{l}</div>
            </div>
          ))}
        </div>
      </div>
      <h3 className="mt-8 flex h-10 items-center gap-[16px] text-[28px] font-medium tracking-[-0.0183em] text-[#374151]"><TrendingUp className="h-8 w-8 text-[#3662e3]" />Weekly Leaders</h3>
      <div className="mt-6 flex flex-col gap-4">
        {LEADERS.map(([I, c, n, p]) => (
          <div key={n} className="flex h-[76px] items-center rounded-[24px] border-2 border-[#dbeafe] bg-white/70 pr-[16px] pl-[16px] text-[28px]">
            <I className={`mr-4 h-8 w-8 ${c}`} />
            <span className="font-medium tracking-[-0.0105em] text-[#1f2937]">{n}</span>
            <span className="ml-auto font-bold text-[#3662e3]">{p}</span>
          </div>
        ))}
      </div>
      <button className="mt-8 flex h-20 w-full justify-center rounded-[20px] border-2 border-[#bfdbfe] bg-white pt-[14px] text-[28px] leading-10 font-medium tracking-[-0.0137em] text-[#2c50cf]">View Full Leaderboard</button>
    </section>
  );
}

function Page() {
  return (
    <div className="relative flex h-[1630px] flex-col overflow-hidden bg-[#f9fafc]">
      <TopNav />
      <SecondNav />
      <main className="flex items-start gap-[48px] pt-[65px] pr-[197px] pl-[197px]">
        <div className="flex w-[1605px] flex-col">
          <Composer />
          <Bubble className="mx-auto mt-[144px] h-24 w-24 text-[#9ca3af]" />
          <p className="mt-[33px] text-center text-[32px] leading-[48px] tracking-[-0.0179em] text-[#6b7280]">No posts yet. Be the first to share something!</p>
          <button className="mx-auto mt-[207px] flex h-20 w-[352px] items-center rounded-[20px] border-2 border-[#e2e8f0] bg-white pl-[32px] text-[28px] font-medium tracking-[-0.0108em] text-[#020817]"><CirclePlus className="mr-[32px] h-8 w-8" />Load More Posts</button>
          <UpcomingEvents />
        </div>
        <div className="flex w-[779px] flex-col">
          <DailyCheckIn />
          <Rankings />
        </div>
      </main>
      <div className="pointer-events-none absolute inset-y-0 left-0 w-[70px] bg-linear-to-r from-black/6 to-transparent" />
    </div>
  );
}

/* ---------- desktop ---------- */

function Backdrop() {
  return (
    <>
      <div className="absolute top-[74px] left-0 h-[1838px] w-[110px] bg-[linear-gradient(180deg,#1b1e14_0%,#23241a_14%,#14130d_30%,#2c2a1c_40%,#3a2f1c_48%,#7a5236_53%,#33230f_60%,#1a2112_72%,#1c2c17_88%,#0b0f08_100%)]" />
      <svg viewBox="0 0 10 360" className="absolute top-[780px] left-0 h-[360px] w-[10px]" preserveAspectRatio="none">
        <path d="M10 20 4 90 0 180V120L6 60z" fill="#d8b07a" /><path d="M10 70 2 170v30l8-70z" fill="#9b3f2c" /><path d="M0 230l10 20v60L0 290z" fill="#a77a55" />
      </svg>
      <div className="absolute top-[74px] right-0 h-[60px] w-[280px] bg-linear-to-r from-[#4a6272] via-[#6a5a4c] to-[#1b1814]" />
      <div className="absolute top-[76px] left-[83px] h-[400px] w-[2560px] rounded-[20px] border-t-2 border-l-2 border-[#55575a] bg-[#232323]" />
      <div className="absolute top-[108px] left-[2700px] h-[1750px] w-[250px] rounded-tr-[24px] border-t-2 border-[#5a5050] bg-[#33262a]" />
      <div className="absolute top-[204px] left-[2700px] h-[1260px] w-[240px] bg-[#181818]" />
      <div className="absolute top-[1458px] left-[2700px] h-[454px] w-[240px] rounded-br-[24px] border-t-2 border-[#777] bg-linear-to-r from-[#333] from-50% to-[#737376]" />
      <div className="absolute top-[270px] left-[2700px] h-[1594px] w-[231px] rounded-br-[18px] border-r-2 border-[#4a4a4a] bg-[#202020]" />
      <div className="absolute top-[130px] left-[68px] flex h-[1782px] w-[2764px] flex-col overflow-hidden rounded-tl-[20px] rounded-b-[24px] border-t-2 border-[#4c4c4c] bg-[#1f1f20]">
        <div className="h-[78px]" />
        <div className="h-[94px] bg-[#29292a]" />
        <div className="flex-1 bg-[#a9aaad]" />
      </div>
      <div className="absolute top-[1469px] left-[78px] h-[166px] w-[30px] bg-[#8199aa]" />
      <div className="absolute top-[1880px] left-[100px] h-[32px] w-[2732px] rounded-br-[24px] bg-linear-to-b from-[#4f5052] from-50% to-[#7a7b7d]" />
      <div className="absolute top-[1880px] left-[68px] h-[32px] w-[120px] rounded-bl-[24px] bg-linear-to-r from-[#c3c3c5] to-transparent" />
      <div className="absolute top-[82px] left-[143px] h-[60px] w-[2746px] rounded-t-[20px] border-t-2 border-[#6f5f5a] bg-[#352425]" />
    </>
  );
}

export default function App() {
  return (
    <div className="relative h-[1912px] w-[2940px] overflow-hidden bg-[#11130e] font-['Inter','Liberation_Sans',sans-serif] whitespace-nowrap [&_p]:whitespace-normal">
      <MenuBar />
      <Backdrop />
      <Dock />
      <div className="absolute top-[92px] left-[98px] flex h-[1804px] w-[2826px] flex-col overflow-hidden rounded-[24px] bg-[#2d1b11] shadow-[0_0_0_2px_#0b0b0b,0_0_16px_rgba(0,0,0,0.25)]">
        <div className="h-[2px] shrink-0 bg-[#7b675a]" />
        <TabStrip />
        <Toolbar />
        <Page />
      </div>
    </div>
  );
}
